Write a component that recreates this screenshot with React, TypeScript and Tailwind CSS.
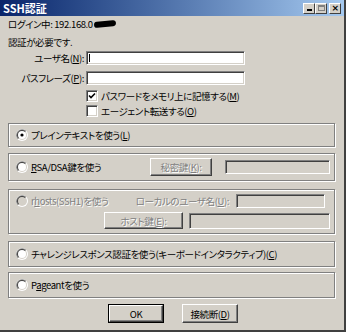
import React from "react";

const face =
  "font-['Noto_Sans_CJK_JP',sans-serif] [font-feature-settings:'palt'] text-[9.5px] leading-[14px] tracking-[-0.4px] whitespace-nowrap";
const dim = "text-[#808080] [text-shadow:1px_1px_0_#fff]";

function U({ children }: { children: React.ReactNode }) {
  return <span className="underline underline-offset-[1px]">{children}</span>;
}

function Field({ w, disabled, caret }: { w: string; disabled?: boolean; caret?: boolean }) {
  return (
    <div
      className={`${w} shrink-0 relative border border-t-[#808080] border-l-[#808080] border-b-white border-r-white shadow-[inset_1px_1px_0_#404040,inset_-1px_-1px_0_#d4d0c8] ${
        disabled ? "bg-[#d4d0c8]" : "bg-white"
      }`}
    >
      {caret && <div className="absolute left-[2px] top-[2px] bottom-[2px] w-px bg-black" />}
    </div>
  );
}

function Btn({ w, h, def, disabled, children }: { w: string; h: string; def?: boolean; disabled?: boolean; children: React.ReactNode }) {
  return (
    <div className={`${w} ${h} shrink-0 flex ${def ? "border border-black" : ""}`}>
      <div
        className={`flex-1 flex items-center justify-center border border-t-white border-l-white border-b-[#404040] border-r-[#404040] shadow-[inset_-1px_-1px_0_#808080] ${
          disabled ? dim : "text-black"
        }`}
      >
        {children}
      </div>
    </div>
  );
}

function Radio({ checked, disabled }: { checked?: boolean; disabled?: boolean }) {
  return (
    <svg width="12" height="12" viewBox="0 0 12 12" className="shrink-0">
      <circle cx="6" cy="6" r="6" fill="#fff" />
      <path d="M1.76 10.24 A6 6 0 0 1 10.24 1.76 Z" fill="#808080" />
      <circle cx="6" cy="6" r="5" fill="#d4d0c8" />
      <path d="M2.46 9.54 A5 5 0 0 1 9.54 2.46 Z" fill="#404040" />
      <circle cx="6" cy="6" r="4" fill={disabled ? "#d4d0c8" : "#fff"} />
      {checked && <circle cx="6" cy="6" r="1.6" fill="#000" />}
    </svg>
  );
}

function Check({ checked }: { checked?: boolean }) {
  return (
    <div className="w-[12px] h-[12px] shrink-0 bg-white border border-t-[#808080] border-l-[#808080] border-b-white border-r-white shadow-[inset_1px_1px_0_#404040,inset_-1px_-1px_0_#d4d0c8] flex items-center justify-center">
      {checked && (
        <svg width="8" height="8" viewBox="0 0 8 8">
          <path d="M1 3.5 L3 5.5 L7 1.5" stroke="#000" strokeWidth="1.6" fill="none" />
        </svg>
      )}
    </div>
  );
}

function Group({ h, mt, children }: { h: string; mt: string; children: React.ReactNode }) {
  return (
    <div className={`${h} ${mt} w-[327px] border border-[#808080] shadow-[inset_1px_1px_0_#fff,1px_1px_0_#fff] pl-[7px] pr-[4px]`}>
      {children}
    </div>
  );
}

function TitleBtn({ children }: { children: React.ReactNode }) {
  return (
    <div className="w-[12px] h-[11px] bg-[#d4d0c8] border border-t-white border-l-white border-b-[#404040] border-r-[#404040] flex items-center justify-center">
      {children}
    </div>
  );
}

export default function App() {
  return (
    <div className={`w-[346px] h-[332px] bg-[#d4d0c8] flex flex-col border-r-2 border-b-2 border-r-[#404040] border-b-[#404040] ${face}`}>
      {/* title bar */}
      <div className="h-[16px] shrink-0 flex items-center justify-between bg-gradient-to-r from-[#0a246a] to-[#a6caf0] pl-[3px] pr-[3px]">
        <span className="text-white font-bold text-[11px] tracking-normal">SSH認証</span>
        <div className="flex items-center">
          <TitleBtn>
            <div className="w-[5px] h-[2px] bg-black mt-[4px]" />
          </TitleBtn>
          <TitleBtn>
            <div className="w-[7px] h-[6px] border border-[#808080] border-t-2" />
          </TitleBtn>
          <div className="w-[2px]" />
          <TitleBtn>
            <span className="text-[9px] leading-none font-bold font-['DejaVu_Sans',sans-serif]">×</span>
          </TitleBtn>
        </div>
      </div>

      <div className="flex flex-col px-[8px]">
        <div className="h-[14px] mt-[1px] flex items-center">
          <span>ログイン中: 192.168.0</span>
          <span className="w-[22px] h-[6px] bg-black rounded-full -rotate-6 ml-[1px]" />
        </div>
        <div className="h-[14px] mt-[4px] flex items-center">認証が必要です.</div>

        <div className="h-[14px] mt-[2px] flex items-center gap-[2px]">
          <span className="w-[76px] text-right">
            ユーザ名(<U>N</U>):
          </span>
          <Field w="w-[159px] h-[14px]" caret />
        </div>
        <div className="h-[14px] mt-[6px] flex items-center gap-[2px]">
          <span className="w-[76px] text-right">
            パスフレーズ(<U>P</U>):
          </span>
          <Field w="w-[159px] h-[14px]" />
        </div>

        <div className="h-[15px] mt-[3px] flex items-center gap-[3px] pl-[78px]">
          <Check checked />
          <span>
            パスワードをメモリ上に記憶する(<U>M</U>)
          </span>
        </div>
        <div className="h-[15px] flex items-center gap-[3px] pl-[78px]">
          <Check />
          <span>
            エージェント転送する(<U>O</U>)
          </span>
        </div>

        <Group h="h-[24px]" mt="mt-[5px]">
          <div className="h-full flex items-center gap-[3px]">
            <Radio checked />
            <span>
              プレインテキストを使う(<U>L</U>)
            </span>
          </div>
        </Group>

        <Group h="h-[28px]" mt="mt-[6px]">
          <div className="h-full flex items-center gap-[3px]">
            <Radio />
            <span>
              <U>R</U>SA/DSA鍵を使う
            </span>
            <div className="flex-1" />
            <Btn w="w-[62px]" h="h-[18px]" disabled>
              秘密鍵(<U>K</U>):
            </Btn>
            <div className="w-[7px]" />
            <Field w="w-[105px] h-[14px]" disabled />
          </div>
        </Group>

        <Group h="h-[45px]" mt="mt-[8px]">
          <div className="flex flex-col pt-[4px]">
            <div className="h-[14px] flex items-center gap-[3px]">
              <Radio disabled />
              <span className={dim}>
                r<U>h</U>osts(SSH1)を使う
              </span>
              <div className="flex-1" />
              <span className={dim}>
                ローカルのユーザ名(<U>U</U>):
              </span>
              <div className="w-[1px]" />
              <Field w="w-[89px] h-[14px]" disabled />
              <div className="w-[2px]" />
            </div>
            <div className="h-[17px] mt-[4px] flex items-center">
              <div className="w-[88px]" />
              <Btn w="w-[79px]" h="h-[17px]" disabled>
                ホスト鍵(<U>E</U>):
              </Btn>
              <div className="w-[6px]" />
              <Field w="w-[141px] h-[16px]" disabled />
            </div>
          </div>
        </Group>

        <Group h="h-[26px]" mt="mt-[7px]">
          <div className="h-full flex items-center gap-[3px]">
            <Radio />
            <span>
              チャレンジレスポンス認証を使う(キーボードインタラクティブ)(<U>C</U>)
            </span>
          </div>
        </Group>

        <Group h="h-[26px]" mt="mt-[5px]">
          <div className="h-full flex items-center gap-[3px]">
            <Radio />
            <span>
              P<U>a</U>geantを使う
            </span>
          </div>
        </Group>

        <div className="mt-[6px] flex pl-[100px] gap-[18px]">
          <Btn w="w-[56px]" h="h-[19px]" def>
            OK
          </Btn>
          <Btn w="w-[56px]" h="h-[19px]">
            接続断(<U>D</U>)
          </Btn>
        </div>
      </div>
    </div>
  );
}
